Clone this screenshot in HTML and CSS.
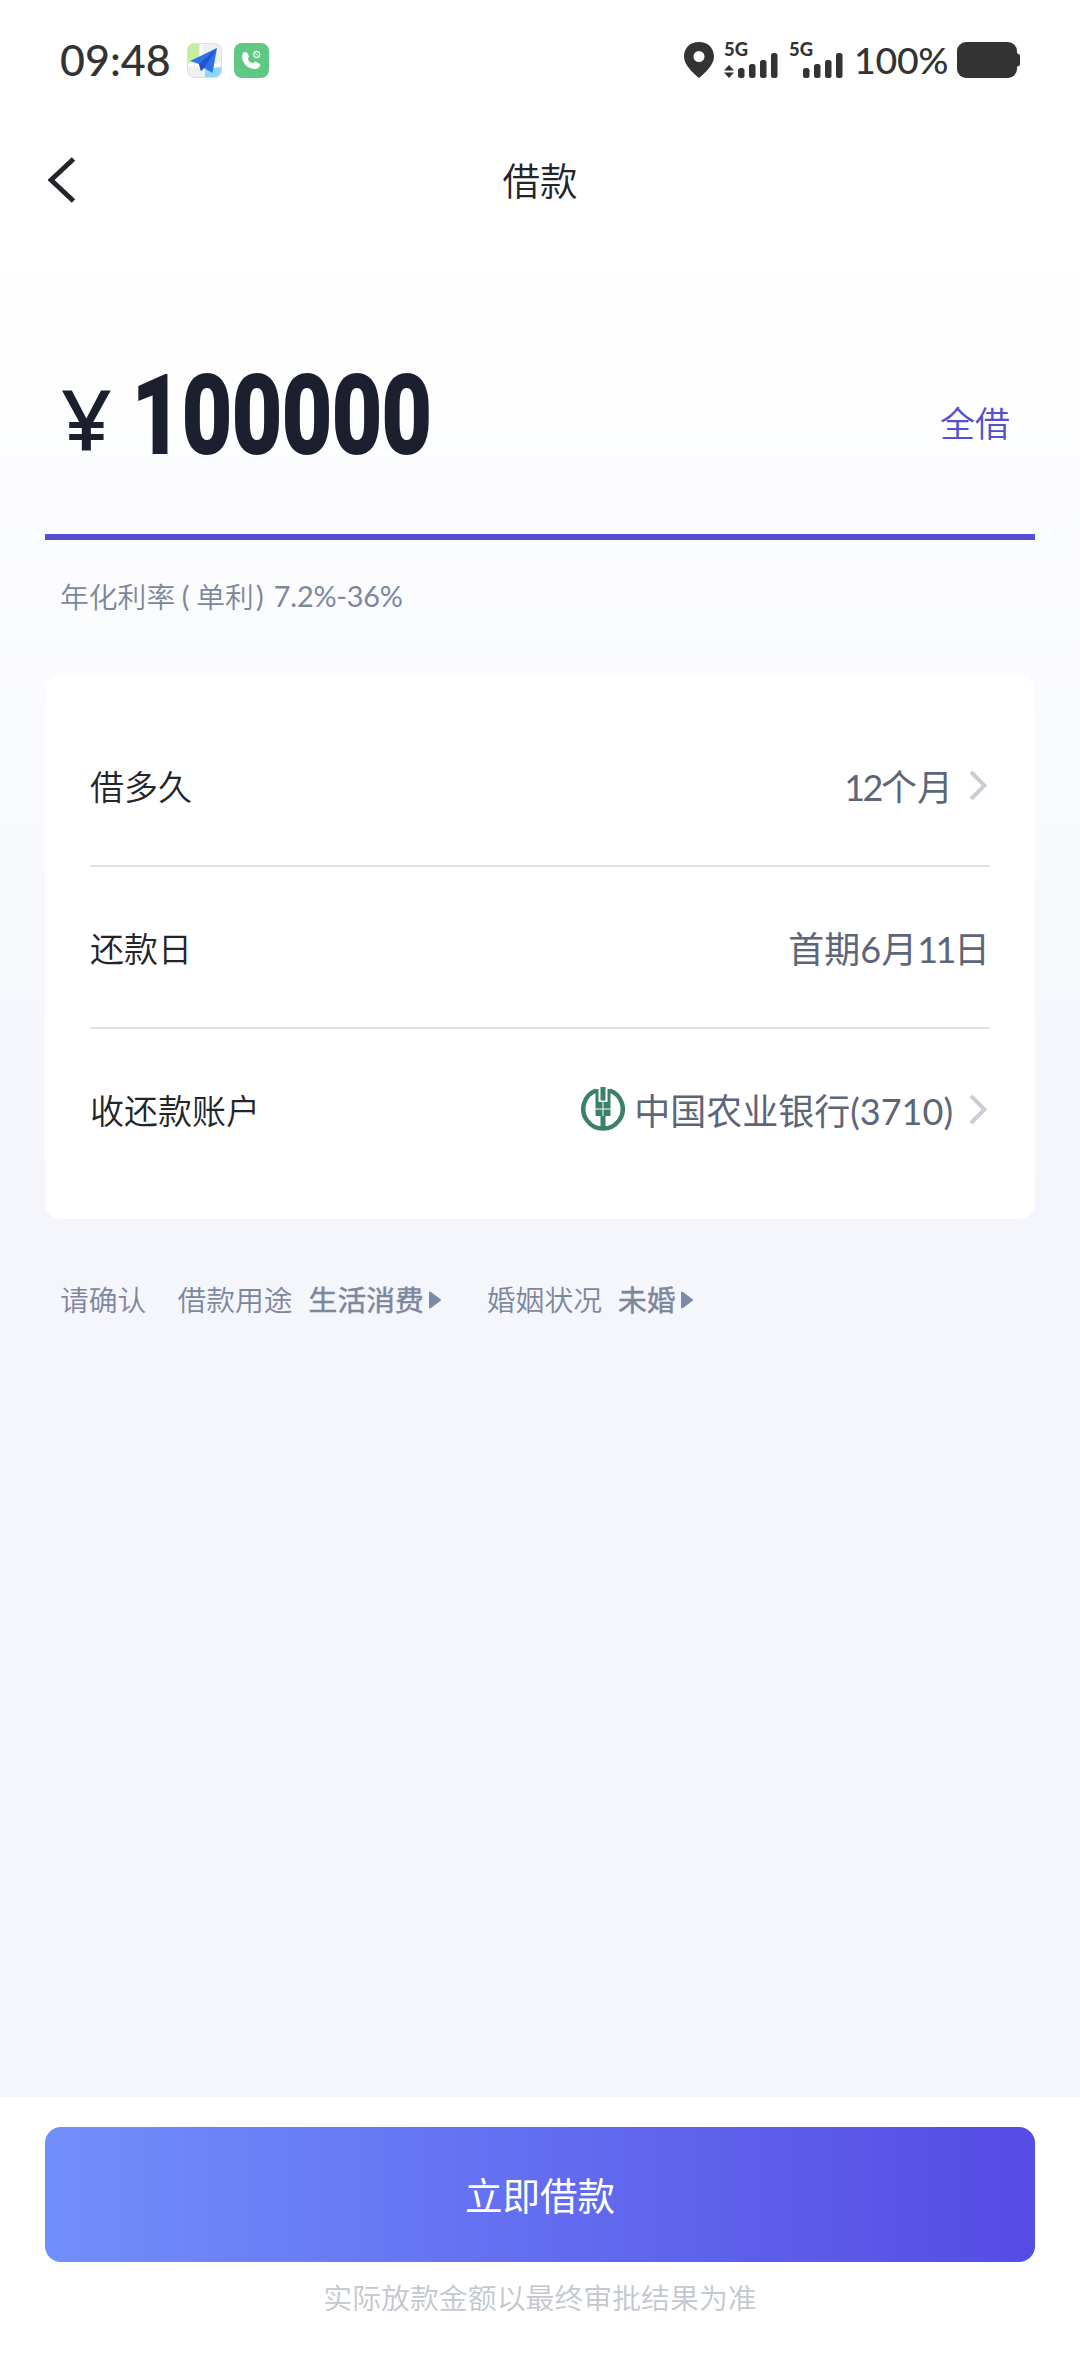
FILE: index.html
```
<!DOCTYPE html>
<html lang="zh-CN">

<head>
	<title>借款</title>
	<meta charset="utf-8">
	<link rel="stylesheet" href="styles.css">
</head>

<body>
	<div class="status-bar">
		<span class="time">09:48</span>
		<svg class="app-icon" viewBox="0 0 35 35">
			<defs>
				<clipPath id="map-clip"><rect width="35" height="35" rx="8"/></clipPath>
			</defs>
			<g clip-path="url(#map-clip)">
				<rect width="35" height="35" fill="#eef0f2"/>
				<path d="M0 0H13V13L0 21Z" fill="#c6ee9c"/>
				<path d="M18 26L35 24V35H18Z" fill="#8fd6fb"/>
				<path d="M14 0V13M0 22H35" stroke="#fff" stroke-width="3"/>
				<path d="M3 18L30 5L25.500 30L17 25L14 28L12 21Z" fill="#3072e8"/>
				<path d="M30 5L12 21L14 28L17 25Z" fill="#1f55cd"/>
			</g>
			<rect x=".5" y=".5" width="34" height="34" rx="8" fill="none" stroke="#dcdee0"/>
		</svg>
		<svg class="app-icon" viewBox="0 0 35 35">
			<rect width="35" height="35" rx="8" fill="#5fc882"/>
			<path d="M9 10Q12 7.500 14 11L15 13.500Q13.500 15.500 14.500 17.500Q16 20 19 20L21.500 18.500L26 21Q27 23.500 23.500 25.500Q18 27.500 12.500 23Q6 16 9 10Z" fill="#fff"/>
			<circle cx="22.700" cy="11.500" r="3" fill="none" stroke="#dff6e6" stroke-width="1.300"/>
			<path d="M21 10L24.500 13" stroke="#dff6e6"/>
		</svg>

		<div class="status-right">
			<svg class="pin" viewBox="0 0 30 36">
				<path fill-rule="evenodd" d="M15 0C24 0 30 6 30 14.500C30 23 21 31 15 36C9 31 0 23 0 14.500C0 6 6 0 15 0ZM15 9A5.500 5.500 0 1 0 15 20A5.500 5.500 0 1 0 15 9Z"/>
			</svg>
			<svg class="signal" viewBox="0 0 55 36">
				<text x="0" y="14" textLength="24" lengthAdjust="spacingAndGlyphs">5G</text>
				<path d="M0 28.500L5 23L10 28.500ZM0 30.500H10L5 36Z"/>
				<rect x="14" y="26" width="6.500" height="10" rx="2.500"/>
				<rect x="25" y="22" width="6.500" height="14" rx="2.500"/>
				<rect x="36" y="18" width="6.500" height="18" rx="2.500"/>
				<rect x="47" y="11" width="6.500" height="25" rx="2.500"/>
			</svg>
			<svg class="signal" viewBox="0 0 55 36">
				<text x="0" y="14" textLength="24" lengthAdjust="spacingAndGlyphs">5G</text>
				<rect x="14" y="26" width="6.500" height="10" rx="2.500"/>
				<rect x="25" y="22" width="6.500" height="14" rx="2.500"/>
				<rect x="36" y="18" width="6.500" height="18" rx="2.500"/>
				<rect x="47" y="11" width="6.500" height="25" rx="2.500"/>
			</svg>
			<span class="percent">100%</span>
			<svg class="battery" viewBox="0 0 63 36">
				<rect width="60" height="36" rx="9"/>
				<path d="M59 11Q63 12 63 14V22Q63 24 59 25Z"/>
			</svg>
		</div>
	</div>

	<header class="nav">
		<svg class="back" viewBox="0 0 28 46">
			<path d="M25.500 2L3 23L25.500 44"/>
		</svg>
		<h1>借款</h1>
	</header>

	<main>
		<div class="amount">
			<span class="yen">¥</span>
			<span class="number">100000</span>
			<a class="all">全借</a>
		</div>
		<p class="rate">年化利率<span class="paren">(</span>单利<span class="paren close">)</span><span class="rate-value">7.2%-36%</span></p>

		<div class="card">
			<div class="row">
				<span class="label">借多久</span>
				<span class="value"><span class="tight">12</span>个月</span>
				<svg class="chevron" viewBox="0 0 18 31"><path d="M2 2L15.500 15.500L2 29"/></svg>
			</div>
			<div class="row">
				<span class="label">还款日</span>
				<span class="value">首期6月<span class="tight">11</span>日</span>
			</div>
			<div class="row">
				<span class="label">收还款账户</span>
				<svg class="bank" viewBox="0 0 44 44">
					<path d="M15 3.500A19.700 19.700 0 1 0 29 3.500" fill="none" stroke="#3b8068" stroke-width="4.500"/>
					<path d="M19.500 0H24.500V13.500H19.500ZM14.500 2H17.500V15H21.500V21.500H14.500ZM29.500 2H26.500V15H22.500V21.500H29.500ZM14.500 22.500H21.500V29H14.500ZM22.500 22.500H29.500V29H22.500ZM19.500 29H24.500V42H19.500Z" fill="#3b8068"/>
				</svg>
				<span class="value">中国农业银行(3710)</span>
				<svg class="chevron" viewBox="0 0 18 31"><path d="M2 2L15.500 15.500L2 29"/></svg>
			</div>
		</div>

		<div class="confirm">
			<span class="lead">请确认</span>
			<span>借款用途</span>
			<b>生活消费</b>
			<svg class="caret" viewBox="0 0 12 18"><path d="M1 1.500L11 9L1 16.500Z"/></svg>
			<span class="second">婚姻状况</span>
			<b>未婚</b>
			<svg class="caret" viewBox="0 0 12 18"><path d="M1 1.500L11 9L1 16.500Z"/></svg>
		</div>
	</main>

	<footer>
		<button>立即借款</button>
		<p>实际放款金额以最终审批结果为准</p>
	</footer>
</body>
</html>
```

FILE: styles.css
```
* {
	margin: 0;
	padding: 0;
	box-sizing: border-box;
}

body {
	display: flex;
	flex-direction: column;
	height: 2376px;
	font-family: Lato, 'Noto Sans CJK SC', sans-serif;
	color: #23252b;
	background: linear-gradient(#fff 240px, #f4f6fc 1180px);
}

svg {
	display: block;
	flex: none;
}

.status-bar {
	display: flex;
	align-items: center;
	height: 120px;
	padding: 0 60px;
	color: #333;
	fill: #333;
}

.time {
	width: 127px;
	padding-bottom: 2px;
	font-size: 43px;
	font-weight: 500;
}

.app-icon {
	width: 35px;
	height: 35px;
	margin-right: 12px;
}

.status-right {
	display: flex;
	align-items: center;
	margin-left: auto;
}

.pin {
	width: 30px;
	height: 36px;
	margin-right: 10px;
}

.signal {
	width: 55px;
	height: 36px;
	margin-right: 10px;
	overflow: visible;
	font: 900 18px Lato, sans-serif;
}

.percent {
	width: 103px;
	padding-bottom: 2px;
	font-size: 37.500px;
	font-weight: 500;
	letter-spacing: -.3px;
	white-space: nowrap;
}

.battery {
	width: 63px;
	height: 36px;
}

.nav {
	display: grid;
	grid-template-columns: 1fr auto 1fr;
	align-items: center;
	height: 120px;
	padding: 0 48px;
}

.back {
	width: 28px;
	height: 46px;
	fill: none;
	stroke: #23252b;
	stroke-width: 5;
}

h1 {
	padding-bottom: 4px;
	font-size: 37.500px;
	font-weight: 350;
}

main {
	flex: 1;
	padding: 0 45px;
}

.amount {
	display: flex;
	align-items: center;
	height: 300px;
	padding: 58px 25px 0 16px;
	border-bottom: 6px solid #544ed0;
	color: #1b1f2e;
}

.yen {
	width: 71px;
	padding-top: 4px;
	font: 500 84px/1 'Noto Sans', sans-serif;
	transform: scaleX(1.060);
	transform-origin: left;
}

.number {
	font: 800 109px/1 Roboto, sans-serif;
	-webkit-text-stroke: 2px #1b1f2e;
	transform: scaleX(.795);
	transform-origin: left;
}

.all {
	margin-left: auto;
	padding-top: 10px;
	font-size: 35px;
	font-weight: 350;
	color: #544ed0;
}

.rate {
	display: flex;
	align-items: center;
	height: 114px;
	padding: 0 0 3px 15px;
	font-size: 28.800px;
	font-weight: 350;
	color: #7d879c;
}

.paren {
	width: 21px;
	text-align: center;
	font-weight: 400;
}

.close {
	width: 12px;
}

.rate-value {
	margin-left: 8px;
	font-weight: 400;
	letter-spacing: -.2px;
}

.card {
	margin-top: 21px;
	height: 544px;
	padding: 30px 45px;
	border-radius: 16px;
	background: #fff;
}

.row {
	display: flex;
	align-items: center;
	height: 162px;
	border-bottom: 2px solid #e2e2e4;
}

.row:last-child {
	border-bottom: none;
	padding-bottom: 2px;
}

.label {
	margin-right: auto;
	font-size: 34px;
	font-weight: 350;
}

.value {
	padding-bottom: 1px;
	font-size: 36px;
	color: #5d6678;
}

.tight {
	letter-spacing: -2.500px;
}

.chevron {
	width: 18px;
	height: 31px;
	margin: 0 3px 0 16px;
	fill: none;
	stroke: #cacdd6;
	stroke-width: 4;
}

.bank {
	width: 44px;
	height: 44px;
	margin-right: 9px;
}

.confirm {
	display: flex;
	align-items: center;
	height: 162px;
	padding-left: 15px;
	font-size: 28.800px;
	font-weight: 350;
	color: #7d879c;
}

.confirm span, .confirm b {
	padding-bottom: 3px;
}

.confirm b {
	margin: 0 5px 0 16px;
	font-weight: 400;
	-webkit-text-stroke: .5px #7d879c;
}

.lead {
	margin-right: 31px;
}

.second {
	margin-left: 46px;
}

.caret {
	width: 12px;
	height: 18px;
	fill: #7d8aa3;
	stroke: #7d8aa3;
	stroke-width: 2;
	stroke-linejoin: round;
}

footer {
	height: 279px;
	padding: 30px 45px 0;
	text-align: center;
	background: #fff;
}

button {
	display: block;
	width: 100%;
	height: 135px;
	padding-bottom: 3px;
	border: none;
	border-radius: 16px;
	font: 37.500px 'Noto Sans CJK SC', sans-serif;
	color: #fff;
	background: linear-gradient(90deg, #718ffb, #554be5);
}

footer p {
	margin-top: 13px;
	font-size: 28.900px;
	font-weight: 350;
	color: #c3c7ce;
}
```
